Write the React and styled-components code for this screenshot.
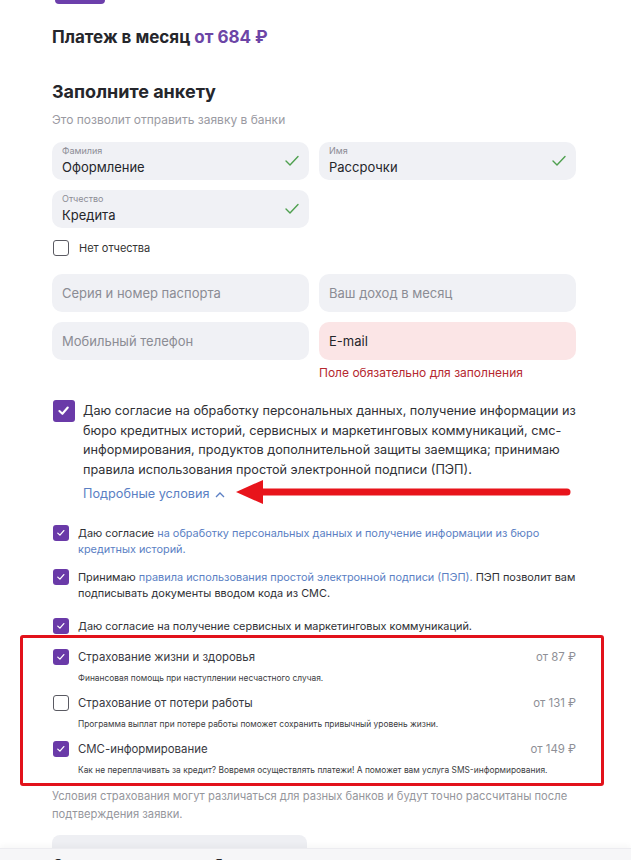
import React from 'react';
import styled, { createGlobalStyle } from 'styled-components';

const GlobalStyle = createGlobalStyle`
  body {
    margin: 0;
    background: #fff;
    font-family: Inter, "Noto Sans", sans-serif;
    color: #222;
  }
`;

const Screen = styled.div`
  position: relative;
  width: 631px;
  height: 860px;
  overflow: hidden;
`;

const Page = styled.div`
  padding: 0 55px 0 52px;
`;

const Tab = styled.div`
  width: 50px;
  height: 4px;
  margin-left: 3px;
  background: #6c3fab;
  border-radius: 0 0 10px 10px;
`;

const Payment = styled.h2`
  margin: 22px 0 0;
  font-size: 17px;
  line-height: 22px;
  font-weight: 700;
  color: #25262b;

  span {
    color: #6c45a6;
  }
`;

const Title = styled.h3`
  margin: 32px 0 0;
  font-size: 18px;
  line-height: 24px;
  font-weight: 700;
  color: #25262b;
`;

const Subtitle = styled.p`
  margin: 8px 0 0;
  font-size: 12px;
  line-height: 16px;
  color: #9a9aa2;
`;

const Grid = styled.div`
  display: grid;
  grid-template-columns: 1fr 1fr;
  gap: 10px;
  margin-top: ${(p) => p.$top || 0}px;
`;

const FieldBox = styled.div`
  position: relative;
  height: 38px;
  box-sizing: border-box;
  border-radius: 10px;
  background: ${(p) => (p.$error ? '#fbe5e6' : '#f0f1f5')};
  padding: ${(p) => (p.$filled ? '3px 10px 0' : '0 10px')};
  display: flex;
  flex-direction: column;
  justify-content: ${(p) => (p.$filled ? 'flex-start' : 'center')};
`;

const FieldLabel = styled.div`
  font-size: 9px;
  line-height: 12px;
  color: #8d8d95;
`;

const FieldValue = styled.div`
  font-size: 13px;
  line-height: 20px;
  color: ${(p) => (p.$placeholder ? '#8b8c94' : '#25262b')};
`;

const CheckMark = styled.svg`
  position: absolute;
  right: 9px;
  top: 12px;
`;

const ErrorCell = styled.div`
  grid-column: 2;
  margin-top: -5px;
  font-size: 12px;
  line-height: 16px;
  color: #b5282f;
`;

const Box = styled.span`
  flex: none;
  box-sizing: border-box;
  display: inline-flex;
  align-items: center;
  justify-content: center;
  width: ${(p) => p.$size}px;
  height: ${(p) => p.$size}px;
  border-radius: 3px;
  background: ${(p) => (p.$checked ? '#6a3aa8' : '#fff')};
  border: ${(p) => (p.$checked ? 'none' : '1.3px solid #5a5a62')};
`;

function Checkbox({ size = 16, checked }) {
  return (
    <Box $size={size} $checked={checked}>
      {checked && (
        <svg width={size * 0.6} height={size * 0.6} viewBox="0 0 12 12">
          <polyline
            points="2.2,6.4 4.9,8.9 9.8,3.2"
            fill="none"
            stroke="#fff"
            strokeWidth={size > 18 ? 1.9 : 1.6}
            strokeLinecap="round"
            strokeLinejoin="round"
          />
        </svg>
      )}
    </Box>
  );
}

const NoPatronymic = styled.label`
  display: flex;
  align-items: center;
  gap: 10px;
  margin: 12px 0 0 1px;
  font-size: 11px;
  color: #333;
`;

const MainConsent = styled.div`
  display: flex;
  gap: 8px;
  margin: 19px 0 0 1px;
`;

const MainText = styled.div`
  font-size: 12.7px;
  line-height: 19.5px;
  color: #303136;
  padding-top: 1px;
`;

const MoreLink = styled.div`
  margin-top: 6px;
  display: flex;
  align-items: center;
  gap: 6px;
  color: #5b7fc4;
  font-size: 12.7px;
  line-height: 18px;
`;

const ConsentRow = styled.div`
  display: flex;
  gap: 9px;
  margin: ${(p) => p.$top}px 0 0 1px;
  font-size: 10.9px;
  line-height: 16px;
  color: #303136;

  a {
    color: #5b7fc4;
    text-decoration: none;
  }
`;

const Highlight = styled.div`
  margin: 1px -28px 0 -32px;
  border: 3px solid #e2121b;
  border-radius: 3px;
  padding: 11px 25px 4px 30px;
  display: flex;
  flex-direction: column;
  gap: 8px;
`;

const Insurance = styled.div`
  display: grid;
  grid-template-columns: 16px 1fr auto;
  column-gap: 9px;
  align-items: center;
`;

const InsTitle = styled.div`
  font-size: 11.4px;
  line-height: 16px;
  color: #38393f;
`;

const InsPrice = styled.div`
  font-size: 11.4px;
  color: #8e8f96;
`;

const InsDesc = styled.div`
  grid-column: 2 / 4;
  margin-top: 4px;
  font-size: 8.4px;
  line-height: 18px;
  color: #3c3d42;
`;

const Note = styled.p`
  margin: 1px 0 0;
  font-size: 11.2px;
  line-height: 18px;
  color: #95969c;
`;

const GreyStub = styled.div`
  width: 255px;
  height: 13px;
  margin-top: 12px;
  background: #eeeff3;
  border-radius: 8px 8px 0 0;
`;

const Footer = styled.div`
  height: 40px;
  background: #f6f6f8;
  border-top: 1px solid #ececf0;
  box-shadow: 0 -2px 6px rgba(0, 0, 0, 0.04);
  padding: 6px 0 0 52px;
  font-size: 16px;
  font-weight: 600;
  color: #25262b;
`;

const Arrow = styled.svg`
  position: absolute;
  left: 230px;
  top: 478px;
`;

function Check() {
  return (
    <CheckMark width="16" height="14" viewBox="0 0 16 14">
      <polyline
        points="2,7 6,11 14,2.5"
        fill="none"
        stroke="#4fa04f"
        strokeWidth="1.4"
        strokeLinecap="round"
        strokeLinejoin="round"
      />
    </CheckMark>
  );
}

function Field({ label, value, placeholder, error }) {
  if (label) {
    return (
      <FieldBox $filled>
        <FieldLabel>{label}</FieldLabel>
        <FieldValue>{value}</FieldValue>
        <Check />
      </FieldBox>
    );
  }
  return (
    <FieldBox $error={error}>
      <FieldValue $placeholder={!error}>{placeholder}</FieldValue>
    </FieldBox>
  );
}

const insurances = [
  {
    title: 'Страхование жизни и здоровья',
    price: 'от 87 ₽',
    desc: 'Финансовая помощь при наступлении несчастного случая.',
    checked: true,
  },
  {
    title: 'Страхование от потери работы',
    price: 'от 131 ₽',
    desc: 'Программа выплат при потере работы поможет сохранить привычный уровень жизни.',
    checked: false,
  },
  {
    title: 'СМС-информирование',
    price: 'от 149 ₽',
    desc: 'Как не переплачивать за кредит? Вовремя осуществлять платежи! А поможет вам услуга SMS-информирования.',
    checked: true,
  },
];

export default function App() {
  return (
    <Screen>
      <GlobalStyle />
      <Page>
        <Tab />
        <Payment>
          Платеж в месяц <span>от 684 ₽</span>
        </Payment>
        <Title>Заполните анкету</Title>
        <Subtitle>Это позволит отправить заявку в банки</Subtitle>

        <Grid $top={14}>
          <Field label="Фамилия" value="Оформление" />
          <Field label="Имя" value="Рассрочки" />
          <Field label="Отчество" value="Кредита" />
        </Grid>

        <NoPatronymic>
          <Checkbox size={16} />
          Нет отчества
        </NoPatronymic>

        <Grid $top={18}>
          <Field placeholder="Серия и номер паспорта" />
          <Field placeholder="Ваш доход в месяц" />
          <Field placeholder="Мобильный телефон" />
          <Field placeholder="E-mail" error />
          <ErrorCell>Поле обязательно для заполнения</ErrorCell>
        </Grid>

        <MainConsent>
          <Checkbox size={22} checked />
          <div>
            <MainText>
              Даю согласие на обработку персональных данных, получение информации из
              бюро кредитных историй, сервисных и маркетинговых коммуникаций,
              смс-информирования, продуктов дополнительной защиты заемщика; принимаю
              правила использования простой электронной подписи (ПЭП).
            </MainText>
            <MoreLink>
              Подробные условия
              <svg width="10" height="7" viewBox="0 0 10 7">
                <polyline
                  points="1,6 5,2 9,6"
                  fill="none"
                  stroke="#5b7fc4"
                  strokeWidth="1.3"
                />
              </svg>
            </MoreLink>
          </div>
        </MainConsent>

        <ConsentRow $top={22}>
          <Checkbox size={16} checked />
          <div>
            Даю согласие{' '}
            <a href="#">
              на обработку персональных данных и получение информации из бюро
              кредитных историй.
            </a>
          </div>
        </ConsentRow>
        <ConsentRow $top={12}>
          <Checkbox size={16} checked />
          <div>
            Принимаю <a href="#">правила использования простой электронной подписи (ПЭП).</a>{' '}
            ПЭП позволит вам подписывать документы вводом кода из СМС.
          </div>
        </ConsentRow>
        <ConsentRow $top={17}>
          <Checkbox size={16} checked />
          <div>Даю согласие на получение сервисных и маркетинговых коммуникаций.</div>
        </ConsentRow>

        <Highlight>
          {insurances.map((item) => (
            <Insurance key={item.title}>
              <Checkbox size={16} checked={item.checked} />
              <InsTitle>{item.title}</InsTitle>
              <InsPrice>{item.price}</InsPrice>
              <InsDesc>{item.desc}</InsDesc>
            </Insurance>
          ))}
        </Highlight>

        <Note>
          Условия страхования могут различаться для разных банков и будут точно
          рассчитаны после подтверждения заявки.
        </Note>
        <GreyStub />
      </Page>
      <Footer>Отправить заявку в банки</Footer>

      <Arrow width="345" height="28" viewBox="0 0 345 28">
        <line x1="28" y1="14" x2="337" y2="14" stroke="#e8141b" strokeWidth="7" strokeLinecap="round" />
        <polygon points="6,14 33,2 33,26" fill="#e8141b" />
      </Arrow>
    </Screen>
  );
}
